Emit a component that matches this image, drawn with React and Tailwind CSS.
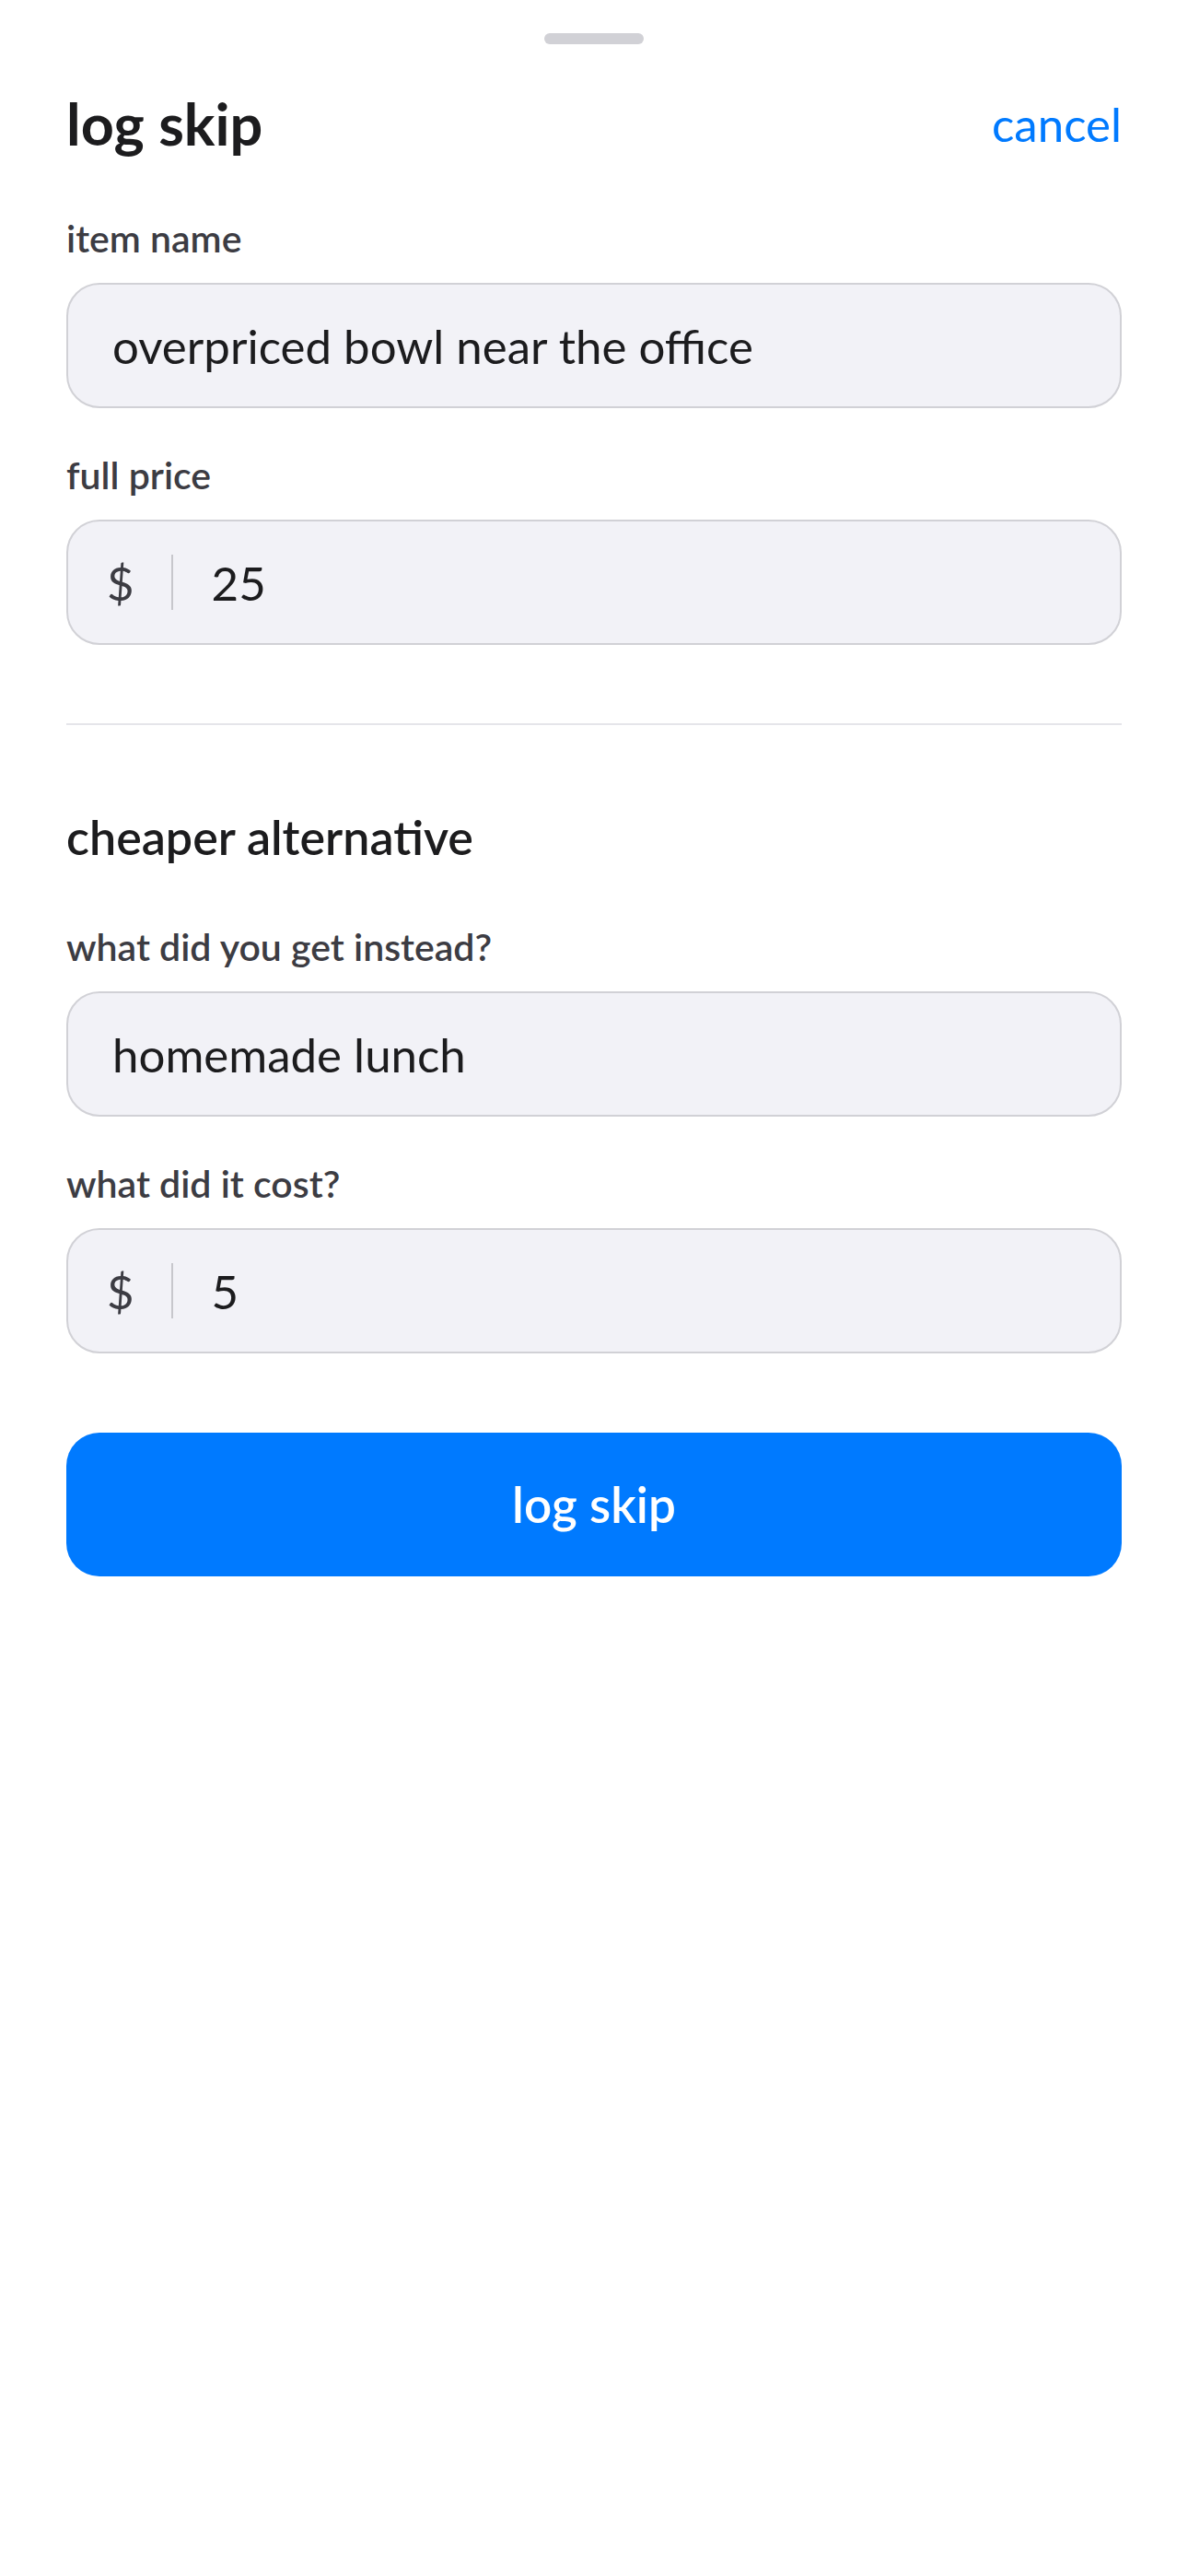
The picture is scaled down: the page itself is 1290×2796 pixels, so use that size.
import React from "react";

const font = { fontFamily: "Lato, 'Noto Sans', sans-serif" };

function Label({ children }) {
  return (
    <div className="text-[41px] leading-[47px] font-semibold text-[#3c3c43] mb-[25px]">
      {children}
    </div>
  );
}

function TextField({ label, value }) {
  return (
    <div>
      <Label>{label}</Label>
      <div className="h-[136px] flex items-center px-[48px] rounded-[36px] border-2 border-[#d1d1d6] bg-[#f2f2f7]">
        <span className="text-[51px] leading-[61px] text-[#1c1c1e]">{value}</span>
      </div>
    </div>
  );
}

function PriceField({ label, value }) {
  return (
    <div>
      <Label>{label}</Label>
      <div className="h-[136px] flex items-center px-[42px] rounded-[36px] border-2 border-[#d1d1d6] bg-[#f2f2f7]">
        <span className="text-[51px] leading-[61px] text-[#3c3c43]">$</span>
        <div className="w-[2px] h-[60px] bg-[#c7c7cc] ml-[40px] mr-[42px]" />
        <span className="text-[51px] leading-[61px] text-[#1c1c1e]">{value}</span>
      </div>
    </div>
  );
}

export default function App() {
  return (
    <div className="min-h-screen bg-white" style={font}>
      <div className="px-[72px]">
        {/* grabber */}
        <div className="pt-[36px] flex justify-center">
          <div className="w-[108px] h-[12px] rounded-full bg-[#d1d1d6]" />
        </div>

        {/* header */}
        <div className="mt-[50px] flex items-center justify-between">
          <h1 className="text-[63px] leading-[72px] font-bold text-[#1c1c1e]">log skip</h1>
          <button className="text-[51px] leading-[61px] text-[#007aff]">cancel</button>
        </div>

        <div className="mt-[65px] flex flex-col gap-[49px]">
          <TextField label="item name" value="overpriced bowl near the office" />
          <PriceField label="full price" value="25" />
        </div>

        <div className="mt-[85px] h-[2px] bg-[#e5e5ea]" />

        <h2 className="mt-[91px] text-[52px] leading-[61px] font-semibold text-[#1c1c1e]">
          cheaper alternative
        </h2>

        <div className="mt-[65px] flex flex-col gap-[49px]">
          <TextField label="what did you get instead?" value="homemade lunch" />
          <PriceField label="what did it cost?" value="5" />
        </div>

        <button className="mt-[86px] w-full h-[156px] rounded-[36px] bg-[#007aff] text-white text-[53px] font-semibold">
          log skip
        </button>
      </div>
    </div>
  );
}
